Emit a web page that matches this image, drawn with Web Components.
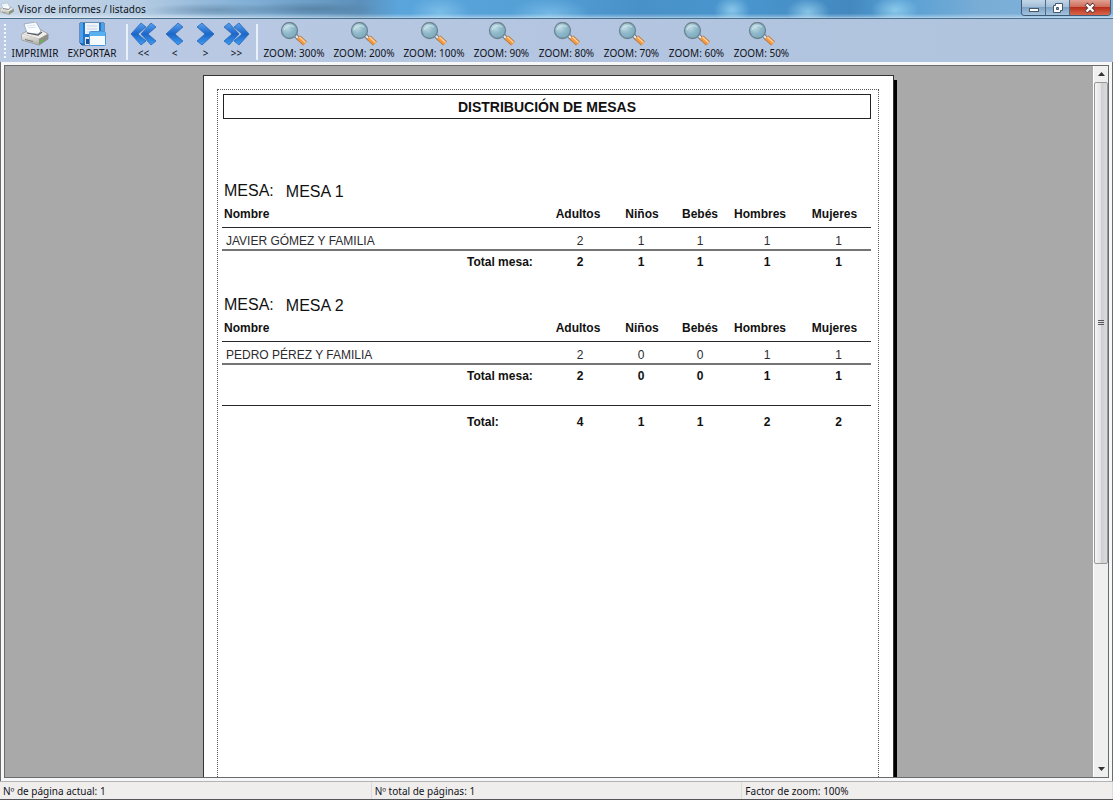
<!DOCTYPE html>
<html lang="es">
<head>
<meta charset="utf-8">
<title>Visor de informes / listados</title>
<style>
html, body { margin: 0; height: 100%; }
body { font: 10px/14px "Noto Sans", "Open Sans", sans-serif; color: #10131a; overflow: hidden; }
</style>
</head>
<body>
<report-viewer></report-viewer>

<script>
const define = (name, html, setup) => {
  const template = document.createElement('template');
  template.innerHTML = html;
  customElements.define(name, class extends HTMLElement {
    constructor() {
      super();
      this.attachShadow({ mode: 'open' }).append(template.content.cloneNode(true));
    }
    connectedCallback() { if (setup) setup(this, this.shadowRoot); }
  });
};

// One arrow head: x is its left edge, w its width, t the thickness of its arms.
const chevron = (x, w, t, flip) => {
  const p = [[w, 4], [w - 5, 0], [0, 11], [w - 5, 22], [w, 18], [t, 11]];
  const points = p.map(([px, py]) => `${x + (flip ? w - px : px)},${py}`).join(' ');
  return `<polygon points="${points}" fill="url(#b)" stroke="#2a68b8" stroke-width=".8" stroke-linejoin="round"/>`;
};
const blue = '<defs><linearGradient id="b" x1="0" y1="0" x2="0" y2="1"><stop offset="0" stop-color="#5aa2ee"/><stop offset=".5" stop-color="#1c66c8"/><stop offset="1" stop-color="#3f9cf0"/></linearGradient></defs>';
const printer = `<svg viewBox="0 0 28 24" width="28" height="24">
  <defs><linearGradient id="p" x1="0" y1="0" x2="0" y2="1"><stop offset="0" stop-color="#f4f3ef"/><stop offset="1" stop-color="#a9a79f"/></linearGradient></defs>
  <path d="M1 12 8 8h12l7 4v5l-9 6L1 18z" fill="#b7b5ad" stroke="#77777a" stroke-width=".7"/>
  <path d="M1 12 8 8h12l7 4-9 5z" fill="#eeede8" stroke="#9a9996" stroke-width=".5"/>
  <path d="M1 12l17 5v6L1 18z" fill="url(#p)"/><path d="M18 17l9-5v5l-9 6z" fill="#8f8e89"/>
  <path d="M6 11 3 2l12-2 5 9-3 3z" fill="#fbfdff" stroke="#8c9bb0" stroke-width=".7"/>
  <path d="M6 4l8-1M7 6l8-1" stroke="#d5e2f1" stroke-width="1"/>
  <path d="M6 11l11 2 4-3" fill="none" stroke="#56585c" stroke-width="1.2"/>
  <path d="M4 17l8 2v1L4 18z" fill="#77787a"/><path d="M19 19l3-2v2l-3 2z" fill="#54c23b"/></svg>`;
const icons = {
  print: printer,
  save: `<svg viewBox="0 0 28 24" width="28" height="24">
    <path d="M2 1h24v22H4l-2-2z" fill="#2474c9" stroke="#175295" stroke-width="1"/>
    <path d="M2 1h3v20H2zM23 1h3v9h-3z" fill="#4ba0ea"/>
    <path d="M7 1h14v11H7z" fill="#eef4fa"/><path d="M9 4h10M9 7h10M9 10h8" stroke="#c9d5e2"/>
    <path d="M7 15h8v8H7z" fill="#dfe4ea"/><path d="M8 17h3v5H8z" fill="#1b4f8f"/>
    <rect x="11.500" y="9.500" width="16" height="14" rx="1" fill="#f5faff" stroke="#4a94d8"/>
    <path d="M12 10h15v4H12z" fill="#58b1ee"/></svg>`,
  first: `<svg viewBox="-1 -1 27 24" width="27" height="24">${blue}${chevron(0, 15, 7)}${chevron(10, 15, 7)}</svg>`,
  prev: `<svg viewBox="-1 -1 19 24" width="19" height="24">${blue}${chevron(0, 17, 9)}</svg>`,
  next: `<svg viewBox="-1 -1 19 24" width="19" height="24">${blue}${chevron(0, 17, 9, true)}</svg>`,
  last: `<svg viewBox="-1 -1 27 24" width="27" height="24">${blue}${chevron(0, 15, 7, true)}${chevron(10, 15, 7, true)}</svg>`,
  zoom: `<svg viewBox="0 0 28 24" width="28" height="24">
    <defs><radialGradient id="z" cx=".35" cy=".3" r=".8"><stop offset="0" stop-color="#c3dce4"/><stop offset=".5" stop-color="#8fb9ca"/><stop offset="1" stop-color="#77a6ba"/></radialGradient></defs>
    <path d="M15 13l4 4" stroke="#64717c" stroke-width="4"/><path d="M15 13l4 4" stroke="#e6e9ec" stroke-width="2.400"/>
    <path d="M18.500 15.500l6.500 6" stroke="#b07040" stroke-width="5.500"/>
    <path d="M18.500 15.500l6.500 6" stroke="#f49a42" stroke-width="4"/>
    <path d="M19.500 15l6 5.500" stroke="#ffd6a0" stroke-width="1.200"/>
    <circle cx="9.500" cy="8.500" r="8" fill="url(#z)" stroke="#6d8390" stroke-width="1.300"/>
    <path d="M4 8a6 5 0 0 1 10-3" fill="none" stroke="#d9edf2" stroke-width="1" opacity=".8"/></svg>`
};

define('title-bar', `<style>
  :host { display: flex; align-items: center; box-sizing: border-box; height: 19px; flex: none; gap: 4px; padding-left: 0;
    border-bottom: 1px solid #48708f;
    background:
      linear-gradient(#fff0 0 75%, #ffffff50 94%, #ffffff90),
      radial-gradient(70px 7px at 215px 10px, #5b7f9c90, #5b7f9c00),
      radial-gradient(70px 7px at 310px 9px, #48718f90, #48718f00),
      radial-gradient(30px 16px at 440px 12px, #8fcdf0a0, #8fcdf000),
      radial-gradient(40px 16px at 550px 14px, #8fcdf090, #8fcdf000),
      radial-gradient(18px 14px at 732px 10px, #a4dcf4b0, #a4dcf400),
      radial-gradient(22px 14px at 808px 12px, #a4dcf4b0, #a4dcf400),
      radial-gradient(24px 14px at 895px 10px, #a4dcf4b0, #a4dcf400),
      linear-gradient(90deg, #c5d6e8, #b4cbe2 140px, #84b1d7 240px, #5c90ba 360px, #5aa5dc 400px, #549fd6 540px, #4890c8 640px, #4a96ce 740px, #4389c0 850px, #569fd4 900px, #79add6 980px, #84b5db); }
  .icon { display: flex; }
  .icon svg { width: 14px; height: 14px; }
  h1 { flex: 1; margin: 0; font: inherit; white-space: nowrap; }
  .buttons { display: flex; align-self: flex-start; height: 16px; margin-right: 2px; box-sizing: border-box;
    border: 1px solid #3d5a76; border-top: 0; border-radius: 0 0 4px 4px; overflow: hidden; }
  button { display: flex; align-items: center; justify-content: center; width: 24px; padding: 0; border: 0;
    border-right: 1px solid #4b6b87; background: linear-gradient(#c3d6e7, #a4bfd8 45%, #7fa3c4 50%, #a3c4df); }
  .close { width: 40px; border-right: 0; background: linear-gradient(#e0a193, #cf6d5b 45%, #b8301c 50%, #d8664a); }
</style>
<span class="icon">${printer}</span><h1><slot></slot></h1>
<div class="buttons">
  <button aria-label="Minimizar"><svg width="12" height="12"><rect x="1.500" y="6.500" width="9" height="3" fill="#fff" stroke="#46586b"/></svg></button>
  <button aria-label="Restaurar"><svg width="12" height="12"><path d="M3.500 1.500h7v7h-2v2h-7v-7h2z" fill="#fff" stroke="#46586b"/><path d="M4.500 5.500h2v2h-2z" fill="#8ba7c0" stroke="#46586b"/></svg></button>
  <button class="close" aria-label="Cerrar"><svg width="12" height="12"><path d="M2 2l8 8M10 2l-8 8" stroke="#5b3a3a" stroke-width="4"/><path d="M2.500 2.500l7 7M9.500 2.500l-7 7" stroke="#fff" stroke-width="2.400"/></svg></button>
</div>`);

define('tool-button', `<style>
  :host { display: block; width: var(--w, 65px); }
  button { display: flex; flex-direction: column; align-items: center; width: 100%; padding: 3px 0 0; border: 0; background: none;
    font: inherit; line-height: 14px; color: inherit; white-space: nowrap; }
  .icon { display: flex; height: 24px; }
</style><button><span class="icon"></span><span><slot></slot></span></button>`,
(el, root) => { root.querySelector('.icon').innerHTML = icons[el.getAttribute('icon')]; });

define('tool-bar', `<style>
  :host { display: flex; box-sizing: border-box; height: 43px; flex: none; padding-left: 4px;
    background: linear-gradient(90deg, #bccbe5, #b3c5e0 50%, #b0c4de); }
  .grip { width: 3px; margin: 5px 0 3px; background: repeating-linear-gradient(#f4f8fd 0 2px, #b9c9e2 2px 4px); background-size: 2px 100%; background-repeat: no-repeat; }
  .sep { width: 2px; margin: 5px 0 2px; background: #e9f0f9; }
  .print { --w: 56px; } .export { --w: 58px; margin-right: 5px; }
  .nav { --w: 31px; } .nav + .sep { margin-left: 4px; margin-right: 1px; } .wide { --w: 70px; }
</style>
<span class="grip"></span>
<tool-button class="print" icon="print">IMPRIMIR</tool-button>
<tool-button class="export" icon="save">EXPORTAR</tool-button>
<span class="sep"></span>
<tool-button class="nav" icon="first">&lt;&lt;</tool-button>
<tool-button class="nav" icon="prev">&lt;</tool-button>
<tool-button class="nav" icon="next">&gt;</tool-button>
<tool-button class="nav" icon="last">&gt;&gt;</tool-button>
<span class="sep"></span>
<tool-button class="wide" icon="zoom">ZOOM: 300%</tool-button>
<tool-button class="wide" icon="zoom">ZOOM: 200%</tool-button>
<tool-button class="wide" icon="zoom">ZOOM: 100%</tool-button>
<tool-button icon="zoom">ZOOM: 90%</tool-button>
<tool-button icon="zoom">ZOOM: 80%</tool-button>
<tool-button icon="zoom">ZOOM: 70%</tool-button>
<tool-button icon="zoom">ZOOM: 60%</tool-button>
<tool-button icon="zoom">ZOOM: 50%</tool-button>`);

const tableStyle = `
  table { width: 100%; table-layout: fixed; border-collapse: collapse; }
  th, td { padding: 0; text-align: center; font-size: 12px; line-height: 16px; white-space: nowrap; }
  .name { width: 245px; } .label { width: 83px; } .a { width: 60px; } .n { width: 62px; } .b { width: 56px; } .h { width: 78px; }
  th:first-child, td:first-child, .total { text-align: left; }`;
const cols = '<colgroup><col class="name"><col class="label"><col class="a"><col class="n"><col class="b"><col class="h"><col></colgroup>';

define('mesa-group', `<style>
  :host { display: block; height: 114px; }
  h3 { display: flex; gap: 12px; margin: 0; padding-left: 2px; font-size: 16px; line-height: 20px; font-weight: normal; height: 22px; }
  h3 span + span { padding-top: 1px; }
  ${tableStyle}
  thead th { height: 24px; vertical-align: top; padding-top: 3px; box-sizing: border-box; }
  thead th:first-child { padding-left: 2px; }
  thead tr { border-bottom: 1px solid #26282e; }
  thead .a { padding-right: 4px; } thead .n { padding-left: 2px; } thead .h { padding-right: 14px; } thead .m { padding-right: 8px; }
  tbody td { height: 22px; padding-top: 5px; box-sizing: border-box; color: #2c2c30; }
  tbody td:first-child { padding-left: 4px; }
  tbody tr { border-bottom: 2px solid #747476; }
  tfoot td { height: 22px; font-weight: bold; }
</style>
<h3><span>MESA:</span><span class="title"></span></h3>
<table>${cols}
  <thead><tr><th scope="col" colspan="2">Nombre</th><th class="a">Adultos</th><th class="n">Niños</th><th>Bebés</th><th class="h">Hombres</th><th class="m">Mujeres</th></tr></thead>
  <tbody><tr></tr></tbody>
  <tfoot><tr></tr></tfoot>
</table>`,
(el, root) => {
  const cells = el.getAttribute('values').split(' ').map(v => `<td>${v}</td>`).join('');
  root.querySelector('.title').textContent = el.getAttribute('mesa');
  root.querySelector('tbody tr').innerHTML = `<td colspan="2">${el.getAttribute('guest')}</td>${cells}`;
  root.querySelector('tfoot tr').innerHTML = `<td></td><td class="total">Total mesa:</td>${cells}`;
});

define('grand-total', `<style>
  :host { display: block; margin-top: -4px; border-top: 1px solid #26282e; padding-top: 8px; }
  ${tableStyle}
  td { font-weight: bold; }
</style>
<table>${cols}<tbody><tr><td></td><td class="total">Total:</td><td>4</td><td>1</td><td>1</td><td>2</td><td>2</td></tr></tbody></table>`);

define('report-page', `<style>
  :host { display: block; box-sizing: border-box; width: 100%; max-width: 691px; height: 1000px; padding: 13px 14px 13px 13px;
    background: #fff; border: 1px solid #333; box-shadow: 3px 5px 0 #000; font-family: "Liberation Sans", Arial, sans-serif; color: #111; }
  .margins { box-sizing: border-box; height: 100%; padding: 4px 7px 0 4px; border: 1px dotted #555; }
  h2 { margin: 0 0 62px 1px; border: 1px solid #222; padding-top: 1px; font-size: 14px; line-height: 22px; text-align: center; }
</style>
<div class="margins"><h2>DISTRIBUCIÓN DE MESAS</h2><slot></slot></div>`);

define('scroll-bar', `<style>
  :host { display: flex; flex-direction: column; width: 15px; flex: none; background: #efefef; border-left: 1px solid #fff; box-sizing: border-box; }
  button { display: flex; align-items: center; justify-content: center; height: 16px; border: 0; padding: 0; background: none; flex: none; }
  .track { flex: 1; }
  .thumb { display: flex; align-items: center; justify-content: center; box-sizing: border-box; height: 71%; border: 1px solid #979797; border-radius: 2px;
    background: linear-gradient(90deg, #f5f5f5, #e4e4e6 45%, #cfcfd2 55%, #dcdcde); }
</style>
<button aria-label="Subir"><svg width="7" height="4"><path d="M0 4 3.500 0 7 4z" fill="#333"/></svg></button>
<div class="track"><div class="thumb"><svg width="8" height="8"><path d="M1 1.500h6M1 3.500h6M1 5.500h6" stroke="#55585c"/></svg></div></div>
<button aria-label="Bajar"><svg width="7" height="4"><path d="M0 0 3.500 4 7 0z" fill="#333"/></svg></button>`);

define('status-bar', `<style>
  :host { display: grid; grid-template-columns: 371fr 370fr 370fr; box-sizing: border-box; height: 19px; flex: none;
    background: #f0eeed; border-top: 1px solid #b3b3b3; border-bottom: 1px solid #55565a; }
  ::slotted(span) { padding: 1px 0 0 3px; line-height: 16px; border-right: 1px solid #dcdada; white-space: nowrap; }
</style><slot></slot>`);

define('report-viewer', `<style>
  :host { display: flex; flex-direction: column; height: 100vh; }
  .frame { flex: 1; min-height: 0; display: flex; box-sizing: border-box; padding: 3px; background: #f6f7f9; border: solid #6a6c70; border-width: 0 1px; }
  .view { flex: 1; display: flex; min-width: 0; border: 1px solid #6b6b6b; }
  .canvas { flex: 1; min-width: 0; overflow: hidden; display: flex; justify-content: center; align-items: flex-start; padding: 9px 1px 0 0; background: #a9a9a9; }
</style>
<title-bar>Visor de informes / listados</title-bar>
<tool-bar></tool-bar>
<div class="frame"><div class="view">
  <div class="canvas">
    <report-page>
      <mesa-group mesa="MESA 1" guest="JAVIER GÓMEZ Y FAMILIA" values="2 1 1 1 1"></mesa-group>
      <mesa-group mesa="MESA 2" guest="PEDRO PÉREZ Y FAMILIA" values="2 0 0 1 1"></mesa-group>
      <grand-total></grand-total>
    </report-page>
  </div>
  <scroll-bar></scroll-bar>
</div></div>
<status-bar><span>Nº de página actual: 1</span><span>Nº total de páginas: 1</span><span>Factor de zoom: 100%</span></status-bar>`);
</script>
</body>
</html>
